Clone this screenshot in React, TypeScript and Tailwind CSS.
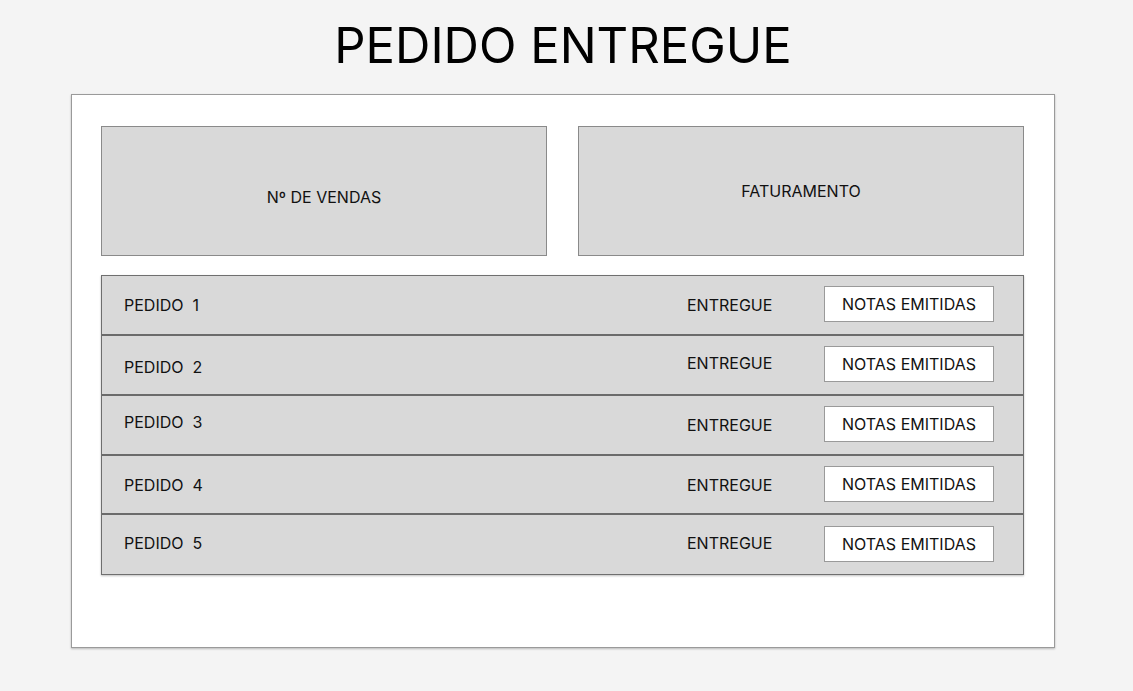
const pedidos = [
  { id: 1, height: 'h-[60px]', nameShift: '', statusShift: '' },
  { id: 2, height: 'h-[60px]', nameShift: 'translate-y-[2px]', statusShift: '-translate-y-[2px]' },
  { id: 3, height: 'h-[60px]', nameShift: '-translate-y-[3px]', statusShift: '' },
  { id: 4, height: 'h-[59px]', nameShift: '', statusShift: '' },
  { id: 5, height: 'h-[59px]', nameShift: '-translate-y-[2px]', statusShift: '-translate-y-[2px]' },
];

function StatCard({ label, shift }: { label: string; shift: string }) {
  return (
    <div className="flex h-[130px] flex-1 items-center justify-center border border-[#8a8a8a] bg-[#d9d9d9]">
      <span className={`text-base text-[#111] ${shift}`}>{label}</span>
    </div>
  );
}

export default function App() {
  return (
    <div
      className="min-h-[691px] w-full bg-[#f4f4f4]"
      style={{ fontFamily: 'Inter, "Noto Sans", sans-serif' }}
    >
      <div className="ml-[71px] w-[984px]">
        <h1 className="flex h-[94px] items-center justify-center pb-[3px] text-[49px] font-normal leading-none text-black">
          PEDIDO ENTREGUE
        </h1>

        {/* Painel principal */}
        <div className="h-[554px] border border-[#9a9a9a] bg-white pl-[29px] pr-[30px] pt-[31px] shadow-[0_1px_2px_rgba(0,0,0,0.25)]">
          <div className="flex gap-[31px]">
            <StatCard label="Nº DE VENDAS" shift="translate-y-[6px]" />
            <StatCard label="FATURAMENTO" shift="" />
          </div>

          {/* Lista de pedidos */}
          <div className="mt-[19px] border border-[#6f6f6f] bg-[#d9d9d9] shadow-[0_1px_2px_rgba(0,0,0,0.25)]">
            {pedidos.map((p, i) => (
              <div
                key={p.id}
                className={`flex items-center pl-[22px] pr-[29px] ${p.height} ${
                  i < pedidos.length - 1 ? 'border-b-2 border-[#6b6b6b]' : ''
                }`}
              >
                <span className={`flex-1 text-base text-[#111] ${p.nameShift}`}>
                  PEDIDO&nbsp;&nbsp;{p.id}
                </span>
                <span className={`w-[137px] text-base text-[#111] ${p.statusShift}`}>
                  ENTREGUE
                </span>
                <button className="flex h-[36px] w-[170px] -translate-y-[1px] items-center justify-center border border-[#9a9a9a] bg-white text-base text-[#111]">
                  NOTAS EMITIDAS
                </button>
              </div>
            ))}
          </div>
        </div>
      </div>
    </div>
  );
}
